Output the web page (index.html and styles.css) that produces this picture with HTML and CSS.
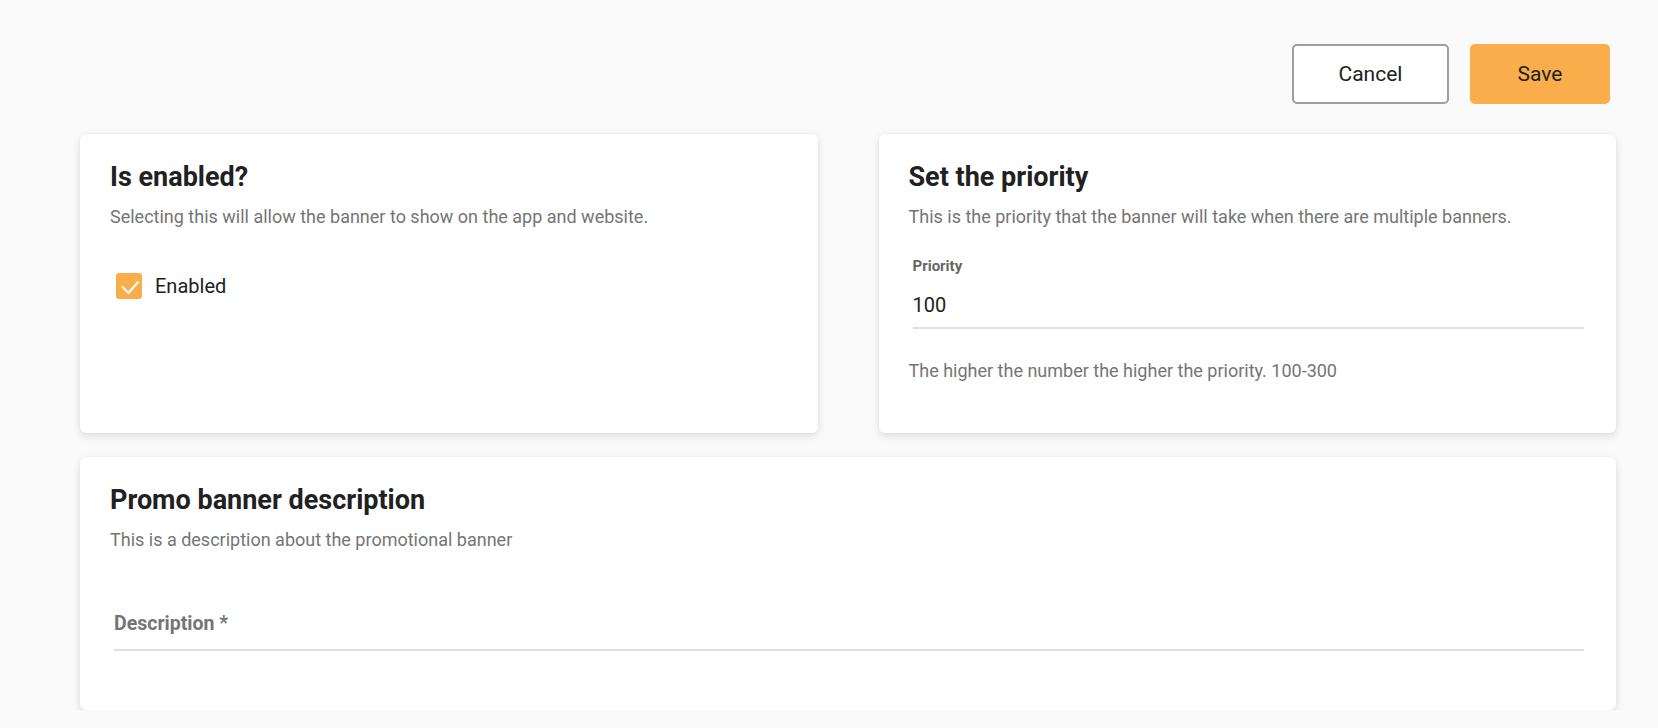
FILE: index.html
```html
<!doctype html>
<html lang="en">
  <head>
    <meta charset="UTF-8" />
    <meta name="viewport" content="width=device-width, initial-scale=1.0" />
    <title>Promo Banner</title>
    <link rel="stylesheet" href="styles.css">
  </head>
  <body>
    <div class="page">
      <div class="actions">
        <button type="button" class="btn btn-cancel">Cancel</button>
        <button type="button" class="btn btn-save">Save</button>
      </div>

      <div class="card-grid">
        <section class="card">
          <h2 class="card-title">Is enabled?</h2>
          <p class="card-sub">Selecting this will allow the banner to show on the app and website.</p>
          <label class="check-row">
            <span class="check-box">
              <svg width="26" height="26" viewBox="0 0 26 26">
                <path d="M6 13.5 L12.5 20 L22.5 8.5" fill="none" stroke="#fff" stroke-width="2" />
              </svg>
            </span>
            <span>Enabled</span>
          </label>
        </section>

        <section class="card">
          <h2 class="card-title">Set the priority</h2>
          <p class="card-sub">This is the priority that the banner will take when there are multiple banners.</p>
          <div class="field">
            <label class="field-label">Priority</label>
            <input class="field-input" type="text" value="100" />
          </div>
          <p class="hint">The higher the number the higher the priority. 100-300</p>
        </section>

        <section class="card card-wide">
          <h2 class="card-title">Promo banner description</h2>
          <p class="card-sub">This is a description about the promotional banner</p>
          <div class="field field-desc">
            <input class="field-input desc-input" type="text" placeholder="Description *" />
          </div>
        </section>
      </div>
    </div>
  </body>
</html>
```

FILE: styles.css
```css
body {
  margin: 0;
  font-family: Roboto, "Liberation Sans", sans-serif;
  background-color: #fafafa;
  color: #212121;
}
.page {
  padding: 44px 42px 0 80px;
}
.actions {
  display: flex;
  justify-content: flex-end;
  gap: 21px;
  padding-right: 6px;
  margin-bottom: 30px;
}
.btn {
  height: 60px;
  border-radius: 5px;
  font-family: inherit;
  font-size: 21px;
  color: #212121;
  cursor: pointer;
  box-sizing: border-box;
}
.btn-cancel {
  width: 157px;
  background: #fff;
  border: 2px solid #9e9e9e;
}
.btn-save {
  width: 140px;
  background: #f9ae4b;
  border: none;
}
.card-grid {
  display: grid;
  grid-template-columns: 1fr 1fr;
  column-gap: 61px;
  row-gap: 24px;
}
.card {
  background: #fff;
  border-radius: 6px;
  padding: 28px 30px 50px;
  box-shadow:
    0 3px 8px rgba(0, 0, 0, 0.12),
    0 0 2px rgba(0, 0, 0, 0.06);
}
.card-wide {
  grid-column: 1 / -1;
}
.card-title {
  margin: 0;
  font-size: 27px;
  line-height: 30px;
  font-weight: 700;
  color: #212121;
}
.card-sub {
  margin: 13px 0 0;
  font-size: 18px;
  line-height: 24px;
  color: #757575;
}
.check-row {
  display: flex;
  align-items: center;
  gap: 13px;
  margin-top: 44px;
  padding-left: 6px;
  font-size: 20px;
  line-height: 26px;
}
.check-box {
  width: 26px;
  height: 26px;
  border-radius: 3px;
  background: #f9ae4b;
  display: flex;
}
.field {
  margin: 28px 2px 0 4px;
}
.field-label {
  display: block;
  font-size: 15px;
  line-height: 18px;
  font-weight: 700;
  color: #666;
}
.field-input {
  display: block;
  width: 100%;
  box-sizing: border-box;
  height: 54px;
  padding: 18px 0 10px;
  border: none;
  border-bottom: 2px solid #e0e0e0;
  background: transparent;
  font-family: inherit;
  font-size: 20px;
  line-height: 24px;
  color: #212121;
  outline: none;
}
.hint {
  margin: 30px 0 0;
  font-size: 18px;
  line-height: 24px;
  color: #757575;
}
.field-desc {
  margin-top: 59px;
  margin-bottom: 9px;
}
.desc-input {
  height: 40px;
  padding: 0 0 14px;
  font-size: 19.5px;
}
.desc-input::placeholder {
  color: #757575;
  font-weight: 700;
  opacity: 1;
}
```
